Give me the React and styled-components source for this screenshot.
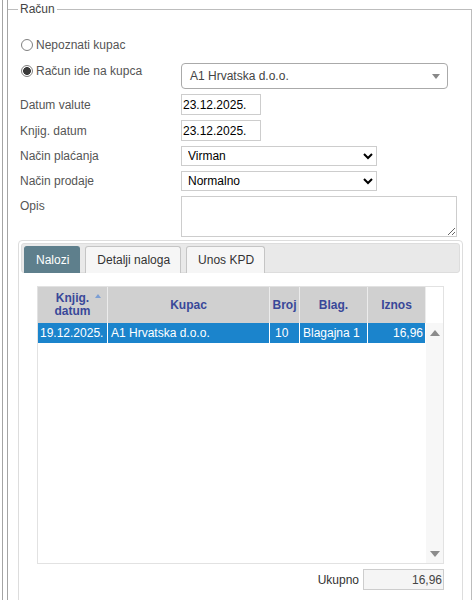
import React from 'react';
import styled, { createGlobalStyle } from 'styled-components';

const Global = createGlobalStyle`
  html, body { margin: 0; padding: 0; background: #fff; }
  body {
    font-family: "Liberation Sans", Arial, sans-serif;
    font-size: 12px;
    color: #333;
  }
  * { box-sizing: border-box; }
`;

const Page = styled.div`
  width: 474px;
  height: 600px;
  overflow: hidden;
  padding-left: 2px;
`;

const OuterRail = styled.div`
  height: 100%;
  border-left: 1px solid #a4a4a4;
  padding-left: 4px;
`;

const InnerRail = styled.div`
  height: 100%;
  border-left: 1px solid #a4a4a4;
  padding-top: 2px;
`;

const Fieldset = styled.fieldset`
  margin: 0;
  width: 464px;
  min-width: 0;
  border: 1px solid #bdbdbd;
  border-left: none;
  padding: 15px 8px 0 10px;
`;

const Legend = styled.legend`
  padding: 0 2px;
  font-size: 12px;
  line-height: 14px;
  color: #444;
`;

const Form = styled.div`
  display: grid;
  grid-template-columns: 163px 1fr;
  row-gap: 5px;
  align-items: center;
`;

const RadioLabel = styled.label`
  display: flex;
  align-items: center;
  gap: 3px;
  padding-left: 3px;
  color: #555;
  line-height: 14px;
  grid-column: ${p => (p.$full ? '1 / span 2' : 'auto')};
  height: ${p => (p.$full ? '27px' : 'auto')};
  align-self: ${p => (p.$full ? 'center' : 'start')};
  margin-top: ${p => (p.$full ? '0' : '1px')};
`;

const RadioInput = styled.input`
  appearance: none;
  margin: 0;
  width: 12px;
  height: 12px;
  border-radius: 50%;
  border: 1px solid #808080;
  background: ${p =>
    p.checked ? 'radial-gradient(circle, #3a3a3a 0 3.6px, #fff 4.2px)' : '#fff'};
`;

const FieldLabel = styled.div`
  padding-left: 2px;
  color: #555;
  line-height: 14px;
  align-self: ${p => (p.$top ? 'start' : 'center')};
  margin-top: ${p => (p.$top ? '3px' : '0')};
`;

const Combo = styled.div`
  position: relative;
  width: 267px;
  height: 26px;
  border: 1px solid #aaa;
  border-radius: 4px;
  display: flex;
  align-items: center;
  padding-left: 8px;
  color: #444;
  background: #fff;
`;

const ComboArrow = styled.span`
  position: absolute;
  right: 7px;
  top: 10px;
  width: 0;
  height: 0;
  border-left: 4px solid transparent;
  border-right: 4px solid transparent;
  border-top: 5px solid #888;
`;

const TextInput = styled.input`
  width: ${p => p.$w}px;
  height: 21px;
  margin: 0;
  border: 1px solid #cdcdcd;
  padding: 0 1px;
  font-family: "Liberation Sans", Arial, sans-serif;
  font-size: 12px;
  color: ${p => p.$color || '#000'};
  background: ${p => p.$bg || '#fff'};
  text-align: ${p => p.$align || 'left'};
  outline: none;
`;

const Select = styled.select`
  width: 196px;
  height: 20px;
  margin: 0;
  border: 1px solid #cdcdcd;
  border-radius: 0;
  background: #fff;
  font-family: "Liberation Sans", Arial, sans-serif;
  font-size: 12px;
  color: #000;
  padding: 0 2px;
`;

const TextArea = styled.textarea`
  width: 276px;
  height: 41px;
  margin: 0;
  border: 1px solid #cdcdcd;
  font-family: "Liberation Sans", Arial, sans-serif;
  font-size: 12px;
  display: block;
`;

const Tabs = styled.div`
  margin-top: 3px;
  border: 1px solid #dddddd;
  border-radius: 4px;
  padding: 2px;
  background: #fff;
`;

const TabNav = styled.div`
  display: flex;
  gap: 5px;
  background: #e9e9e9;
  border: 1px solid #dddddd;
  border-radius: 3px;
  padding: 1px 2px 0;
  height: 30px;
  align-items: flex-end;
`;

const Tab = styled.div`
  height: 27px;
  margin-bottom: -1px;
  padding: 6px 10px 0 11px;
  line-height: 14px;
  border: 1px solid ${p => (p.$active ? '#5e7f8c' : '#c5c5c5')};
  border-bottom: none;
  border-radius: 3px 3px 0 0;
  background: ${p => (p.$active ? '#5e7f8c' : '#f6f6f6')};
  color: ${p => (p.$active ? '#fff' : '#333')};
`;

const Panel = styled.div`
  padding: 13px 16px 60px;
`;

const GridBox = styled.div`
  border: 1px solid #e2e2e2;
  height: 278px;
  display: flex;
  flex-direction: column;
`;

const HeadRow = styled.div`
  display: flex;
  height: 36px;
`;

const HeadCell = styled.div`
  position: relative;
  width: ${p => p.$w}px;
  background: #d0d0d0;
  border-right: 1px solid #ececec;
  color: #394899;
  font-weight: bold;
  line-height: 13px;
  display: flex;
  align-items: center;
  justify-content: center;
  text-align: center;
`;

const SortArrow = styled.span`
  position: absolute;
  right: 6px;
  top: 7px;
  width: 0;
  height: 0;
  border-left: 3px solid transparent;
  border-right: 3px solid transparent;
  border-bottom: 4px solid #7c9fd4;
`;

const HeadSpacer = styled.div`
  flex: 1;
  background: #fff;
`;

const Body = styled.div`
  flex: 1;
  display: flex;
`;

const Rows = styled.div`
  width: 388px;
  background: #fff;
`;

const Row = styled.div`
  display: flex;
  height: 20px;
  background: ${p => (p.$selected ? '#1b84cc' : '#fff')};
  color: ${p => (p.$selected ? '#fff' : '#333')};
`;

const Cell = styled.div`
  width: ${p => p.$w}px;
  border-right: 1px solid #fff;
  padding: 0 ${p => (p.$right ? '2px' : '3px')} 0 ${p => p.$pl || 3}px;
  line-height: 20px;
  white-space: nowrap;
  overflow: hidden;
  text-align: ${p => (p.$right ? 'right' : 'left')};
`;

const Scrollbar = styled.div`
  flex: 1;
  background: #f7f7f7;
  display: flex;
  flex-direction: column;
  justify-content: space-between;
  align-items: center;
  padding: 7px 0 6px;
`;

const ScrollArrow = styled.span`
  width: 0;
  height: 0;
  border-left: 5px solid transparent;
  border-right: 5px solid transparent;
  border-bottom: ${p => (p.$down ? 'none' : '6px solid #8c8c8c')};
  border-top: ${p => (p.$down ? '6px solid #8c8c8c' : 'none')};
`;

const TotalRow = styled.div`
  display: flex;
  justify-content: flex-end;
  align-items: center;
  gap: 4px;
  margin-top: 5px;
  color: #333;
`;

const columns = [
  { key: 'date', w: 70, title: ['Knjig.', 'datum'], sort: true },
  { key: 'kupac', w: 162, title: ['Kupac'] },
  { key: 'broj', w: 30, title: ['Broj'] },
  { key: 'blag', w: 68, title: ['Blag.'] },
  { key: 'iznos', w: 58, title: ['Iznos'] },
];

const rows = [
  { date: '19.12.2025.', kupac: 'A1 Hrvatska d.o.o.', broj: '10', blag: 'Blagajna 1', iznos: '16,96', selected: true },
];

export default function App() {
  return (
    <>
      <Global />
      <Page>
        <OuterRail>
          <InnerRail>
            <Fieldset>
              <Legend>Račun</Legend>
              <Form>
                <RadioLabel $full>
                  <RadioInput type="radio" name="kupac" readOnly />
                  Nepoznati kupac
                </RadioLabel>
                <RadioLabel>
                  <RadioInput type="radio" name="kupac" checked readOnly />
                  Račun ide na kupca
                </RadioLabel>
                <Combo>
                  A1 Hrvatska d.o.o.
                  <ComboArrow />
                </Combo>
                <FieldLabel>Datum valute</FieldLabel>
                <TextInput $w={80} defaultValue="23.12.2025." />
                <FieldLabel>Knjig. datum</FieldLabel>
                <TextInput $w={80} defaultValue="23.12.2025." />
                <FieldLabel>Način plaćanja</FieldLabel>
                <Select defaultValue="Virman">
                  <option>Virman</option>
                  <option>Gotovina</option>
                </Select>
                <FieldLabel>Način prodaje</FieldLabel>
                <Select defaultValue="Normalno">
                  <option>Normalno</option>
                </Select>
                <FieldLabel $top>Opis</FieldLabel>
                <TextArea />
              </Form>
              <Tabs>
                <TabNav>
                  <Tab $active>Nalozi</Tab>
                  <Tab>Detalji naloga</Tab>
                  <Tab>Unos KPD</Tab>
                </TabNav>
                <Panel>
                  <GridBox>
                    <HeadRow>
                      {columns.map(c => (
                        <HeadCell key={c.key} $w={c.w}>
                          <span>
                            {c.title.map((t, i) => (
                              <React.Fragment key={t}>
                                {i > 0 && <br />}
                                {t}
                              </React.Fragment>
                            ))}
                          </span>
                          {c.sort && <SortArrow />}
                        </HeadCell>
                      ))}
                      <HeadSpacer />
                    </HeadRow>
                    <Body>
                      <Rows>
                        {rows.map((r, i) => (
                          <Row key={i} $selected={r.selected}>
                            <Cell $w={70} $pl={2}>{r.date}</Cell>
                            <Cell $w={162}>{r.kupac}</Cell>
                            <Cell $w={30} $pl={5}>{r.broj}</Cell>
                            <Cell $w={68}>{r.blag}</Cell>
                            <Cell $w={58} $right>{r.iznos}</Cell>
                          </Row>
                        ))}
                      </Rows>
                      <Scrollbar>
                        <ScrollArrow />
                        <ScrollArrow $down />
                      </Scrollbar>
                    </Body>
                  </GridBox>
                  <TotalRow>
                    Ukupno
                    <TextInput $w={81} $bg="#f5f5f5" $align="right" $color="#444" readOnly defaultValue="16,96" />
                  </TotalRow>
                </Panel>
              </Tabs>
            </Fieldset>
          </InnerRail>
        </OuterRail>
      </Page>
    </>
  );
}
